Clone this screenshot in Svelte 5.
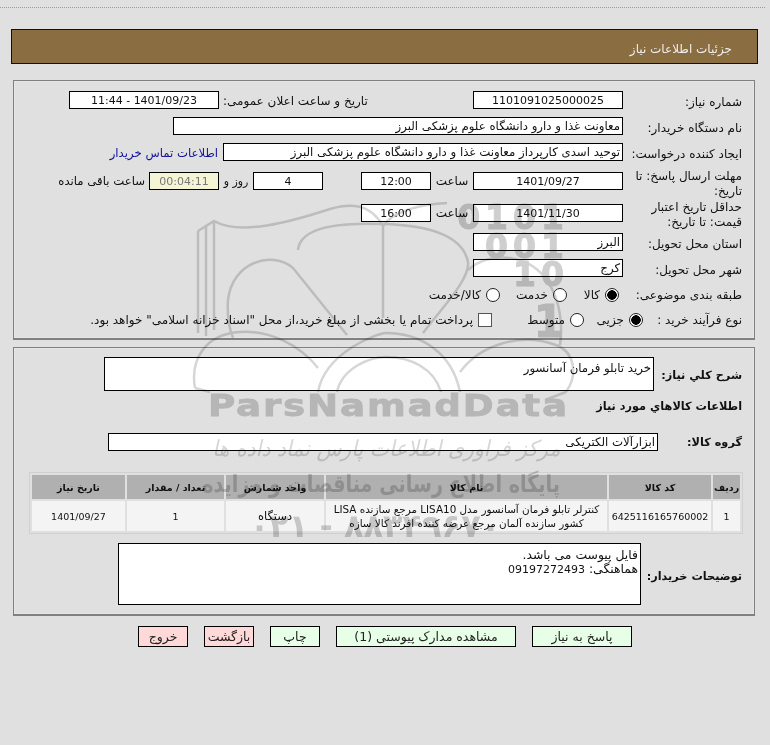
<script>
	const rows = [
		{ no: '1', code: '6425116165760002', name: ['کنترلر تابلو فرمان آسانسور مدل LISA10 مرجع سازنده LISA', 'کشور سازنده آلمان مرجع عرضه کننده افرند کالا سازه'], unit: 'دستگاه', qty: '1', date: '1401/09/27' }
	];
</script>

<div class="page">
	<div class="dots"></div>
	<div class="head">جزئیات اطلاعات نیاز</div>

	<section class="panel first">
		<div class="row h26">
			<div class="lab">شماره نیاز:</div>
			<div class="box w150 c n">1101091025000025</div>
			<div class="lab2">تاریخ و ساعت اعلان عمومی:</div>
			<div class="box w150 c n">1401/09/23 - 11:44</div>
		</div>
		<div class="row h26">
			<div class="lab">نام دستگاه خریدار:</div>
			<div class="box w450">معاونت غذا و دارو دانشگاه علوم پزشکی البرز</div>
		</div>
		<div class="row h29">
			<div class="lab">ایجاد کننده درخواست:</div>
			<div class="box w400">توحید اسدی کارپرداز معاونت غذا و دارو دانشگاه علوم پزشکی البرز</div>
			<span class="link">اطلاعات تماس خریدار</span>
		</div>
		<div class="row h32">
			<div class="lab tall">مهلت ارسال پاسخ: تا تاریخ:</div>
			<div class="box w150 c n">1401/09/27</div>
			<div class="sa">ساعت</div>
			<div class="box w70 c n">12:00</div>
			<div class="box w70 c n ml">4</div>
			<div class="roz">روز و</div>
			<div class="box w70 c n timer">00:04:11</div>
			<div class="left">ساعت باقی مانده</div>
		</div>
		<div class="row h29">
			<div class="lab tall up">حداقل تاریخ اعتبار قیمت: تا تاریخ:</div>
			<div class="box w150 c n">1401/11/30</div>
			<div class="sa">ساعت</div>
			<div class="box w70 c n">16:00</div>
		</div>
		<div class="row h26">
			<div class="lab">استان محل تحویل:</div>
			<div class="box w150">البرز</div>
		</div>
		<div class="row h26">
			<div class="lab">شهر محل تحویل:</div>
			<div class="box w150">کرج</div>
		</div>
		<div class="row opts">
			<div class="lab l-cat">طبقه بندی موضوعی:</div>
			<div class="opt o52"><i class="radio on"></i>کالا</div>
			<div class="opt o67"><i class="radio"></i>خدمت</div>
			<div class="opt"><i class="radio"></i>کالا/خدمت</div>
		</div>
		<div class="row opts proc">
			<div class="lab l-proc">نوع فرآیند خرید :</div>
			<div class="opt o59"><i class="radio on"></i>جزیی</div>
			<div class="opt o92"><i class="radio"></i>متوسط</div>
			<div class="opt"><i class="check"></i>پرداخت تمام یا بخشی از مبلغ خرید،از محل "اسناد خزانه اسلامی" خواهد بود.</div>
		</div>
	</section>

	<section class="panel second">
		<div class="row desc">
			<div class="lab b l88">شرح کلي نیاز:</div>
			<div class="box area1">خرید تابلو فرمان آسانسور</div>
		</div>
		<div class="title b">اطلاعات کالاهاي مورد نیاز</div>
		<div class="row grp">
			<div class="lab b l84">گروه کالا:</div>
			<div class="box w550">ابزارآلات الکتریکی</div>
		</div>

		<table>
			<thead>
				<tr>
					<th class="t1">ردیف</th>
					<th class="t2">کد کالا</th>
					<th class="t3">نام کالا</th>
					<th class="t4">واحد شمارش</th>
					<th class="t5">تعداد / مقدار</th>
					<th class="t6">تاریخ نیاز</th>
				</tr>
			</thead>
			<tbody>
				{#each rows as r}
					<tr>
						<td class="dg">{r.no}</td>
						<td class="dg">{r.code}</td>
						<td class="nm">{#each r.name as line}<div>{line}</div>{/each}</td>
						<td class="un">{r.unit}</td>
						<td class="dg">{r.qty}</td>
						<td class="dg">{r.date}</td>
					</tr>
				{/each}
			</tbody>
		</table>

		<div class="row notes">
			<div class="lab b l101">توضیحات خریدار:</div>
			<div class="box area2">فایل پیوست می باشد.<br />هماهنگی: <span class="n">09197272493</span></div>
		</div>
	</section>

	<div class="btns">
		<button class="g w100">پاسخ به نیاز</button>
		<button class="g w180">مشاهده مدارک پیوستی (1)</button>
		<button class="g w50">چاپ</button>
		<button class="r w50">بازگشت</button>
		<button class="r w50">خروج</button>
	</div>

	<!-- watermark lies over everything -->
	<div class="mark">
		<svg width="770" height="745" viewBox="0 0 770 745" fill="none" stroke="#d6d6d6" stroke-width="2.5">
			<path d="M198 231V333M206 226V336M214 221V330" />
			<path d="M198 231L214 221C240 236 290 222 330 209C350 203 370 203 383 226" />
			<path d="M383 226C392 212 420 204 447 203" />
			<path d="M383 226V318" />
			<path d="M298 250C300 228 335 222 383 224C420 225 462 232 468 262C470 280 440 310 423 333" />
			<path d="M347 335L293 268C272 250 232 262 228 300C227 315 229 328 233 338" />
			<path d="M468 270C490 250 530 254 548 282C560 300 563 325 560 345" />
			<path d="M195 388C190 360 205 334 240 332C270 330 300 345 318 368" />
			<path d="M318 392C325 352 378 333 386 333C420 333 452 352 460 392" />
			<path d="M337 392C342 368 370 357 386 357C410 357 434 368 441 392" />
			<path d="M460 372C480 345 520 332 556 345C575 352 578 375 566 392" />
			<path d="M195 388L210 392M566 392L545 400" />
		</svg>
		<div class="nums"><div>0101</div><div>001</div><div>10</div><div class="one">1</div></div>
		<div class="pnd">ParsNamadData</div>
		<div class="cal">مرکز فراوری اطلاعات پارس نماد داده ها</div>
		<div class="pay">پایگاه اطلاع رسانی مناقصات و مزایده</div>
		<div class="tel">۰۲۱ - ۸۸۳۴۹۶۷۰</div>
	</div>
</div>

<style>
	:global(body) {
		margin: 0;
		background: #e0e0e0;
	}
	.page {
		position: relative;
		width: 770px;
		height: 745px;
		overflow: hidden;
		direction: rtl;
		padding-top: 7px;
		box-sizing: border-box;
		font: 12px/13px "DejaVu Sans", sans-serif;
		color: #111;
	}
	.dots {
		width: 765px;
		margin-right: 5px;
		border-top: 1px dotted #999;
	}
	.head {
		box-sizing: border-box;
		width: 747px;
		height: 35px;
		margin: 21px 12px 0 11px;
		padding: 0 25px;
		border: 1px solid #111;
		background: #8b6d42;
		color: #eee;
		line-height: 38px;
	}
	.panel {
		box-sizing: border-box;
		width: 742px;
		margin: 0 15px 0 13px;
		border: 1px solid #808080;
		border-bottom-width: 2px;
		box-shadow: inset 0 0 0 1px #e6e6e6;
	}
	.first {
		height: 260px;
		margin-top: 16px;
		padding: 10px 12px 0 0;
	}
	.second {
		height: 269px;
		margin-top: 7px;
		padding: 9px 12px 0 0;
	}
	.row {
		display: flex;
		align-items: flex-start;
	}
	.h26 { height: 26px; }
	.h29 { height: 29px; }
	.h32 { height: 32px; }
	.lab {
		flex: none;
		box-sizing: border-box;
		width: 119px;
		padding: 4px 0 0 4px;
		line-height: 15px;
	}
	.tall { margin-top: -3px; padding-top: 0; }
	.up { margin-top: -4px; }
	.box {
		flex: none;
		box-sizing: border-box;
		height: 18px;
		padding: 0 2px;
		border: 1px solid #000;
		background: #fff;
		font-size: 11.75px;
		line-height: 17px;
		white-space: nowrap;
		overflow: hidden;
	}
	.n { font-size: 11px; }
	.c { text-align: center; }
	.w70 { width: 70px; }
	.w150 { width: 150px; }
	.w400 { width: 400px; }
	.w450 { width: 450px; }
	.w550 { width: 550px; }
	.lab2 {
		box-sizing: border-box;
		width: 254px;
		padding: 4px 0 0 4px;
		text-align: left;
	}
	.link {
		margin-right: 5px;
		padding-top: 4px;
		font-size: 11.7px;
		color: #11119a;
	}
	.sa {
		width: 42px;
		padding-top: 3px;
		text-align: center;
	}
	.ml { margin-right: 38px; }
	.roz {
		width: 34px;
		padding-top: 3px;
		font-size: 11px;
		text-align: center;
	}
	.timer {
		background: #f5f5d5;
		color: #777;
	}
	.left {
		margin-right: 4px;
		padding-top: 3px;
		font-size: 11.7px;
	}
	.opts { align-items: center; height: 20px; }
	.proc { margin-top: 5px; }
	.l-cat { width: 123px; padding-top: 0; }
	.l-proc { width: 99px; padding-top: 0; }
	.opt {
		display: flex;
		align-items: center;
		gap: 5px;
		white-space: nowrap;
	}
	.o52 { width: 52px; }
	.o67 { width: 67px; }
	.o59 { width: 59px; }
	.o92 { width: 92px; }
	.radio {
		box-sizing: border-box;
		flex: none;
		width: 14px;
		height: 14px;
		border: 1px solid #222;
		border-radius: 50%;
		background: #fff;
	}
	.radio.on {
		background: radial-gradient(circle, #000 0 4.5px, #fff 5px);
	}
	.check {
		box-sizing: border-box;
		flex: none;
		width: 14px;
		height: 14px;
		border: 1px solid #555;
		background: #fff;
	}
	.b { font-size: 11.3px; font-weight: bold; }
	.desc { height: 76px; }
	.l88 { width: 88px; padding: 11px 0 0 0; }
	.area1 {
		width: 550px;
		height: 34px;
		white-space: normal;
		padding: 2px;
		line-height: 16px;
	}
	.title {
		height: 0;
		margin-top: -33px;
		padding-bottom: 33px;
	}
	.grp { height: 39px; }
	.l84 { width: 84px; padding: 2px 0 0 0; }
	table {
		box-sizing: border-box;
		width: 714px;
		height: 59px;
		margin-right: -1px;
		border: 1px solid #d0d0d0;
		border-spacing: 2px;
		table-layout: fixed;
	}
	th {
		height: 24px;
		padding: 0;
		background: #b0b0b0;
		font-size: 9.5px;
		font-weight: bold;
		text-align: center;
	}
	td {
		height: 30px;
		padding: 0;
		background: #f4f4f4;
		text-align: center;
	}
	.dg { font-size: 9.5px; }
	.un { font-size: 11.5px; }
	.nm {
		font-size: 10.4px;
		line-height: 14px;
		white-space: nowrap;
	}
	.t1 { width: 27px; }
	.t2 { width: 102px; }
	.t3 { width: 281px; }
	.t4 { width: 98px; }
	.t5 { width: 97px; }
	.notes { margin-top: 9px; }
	.l101 { width: 101px; padding: 26px 0 0 0; }
	.area2 {
		width: 523px;
		height: 62px;
		white-space: normal;
		padding: 4px 2px 0;
		font-size: 12.4px;
		line-height: 14px;
	}
	.btns {
		display: flex;
		gap: 16px;
		margin: 10px 138px 0 0;
	}
	button {
		box-sizing: border-box;
		height: 21px;
		padding: 0;
		border: 1px solid #000;
		border-radius: 0;
		font: inherit;
		font-size: 12.5px;
		color: #222;
	}
	.g { background: #e6ffe6; }
	.r { background: #ffd8d8; }
	.w50 { width: 50px; }
	.w100 { width: 100px; }
	.w180 { width: 180px; }
	.mark {
		position: absolute;
		inset: 0;
		pointer-events: none;
		mix-blend-mode: multiply;
		direction: ltr;
		color: #cfcfcf;
		font-family: "DejaVu Sans", sans-serif;
		font-weight: bold;
		white-space: nowrap;
	}
	.mark svg { position: absolute; left: 0; top: 0; }
	.nums {
		position: absolute;
		right: 201px;
		top: 204px;
		text-align: right;
		font-size: 33px;
		line-height: 28.5px;
		letter-spacing: 5px;
		-webkit-text-stroke: 1px #cfcfcf;
	}
	.one { margin-top: 18px; font-size: 44px; }
	.pnd {
		position: absolute;
		left: 208px;
		top: 387px;
		font-size: 31px;
		line-height: 36px;
		letter-spacing: 1.5px;
		transform-origin: left center;
		transform: scaleX(1.2);
		-webkit-text-stroke: 0.8px #cfcfcf;
	}
	.cal {
		position: absolute;
		left: 212px;
		top: 434px;
		width: 350px;
		direction: rtl;
		font-size: 22px;
		line-height: 30px;
		font-weight: normal;
		transform-origin: right center;
		transform: scaleX(0.93) skewX(-14deg);
		color: #d6d6d6;
	}
	.pay {
		position: absolute;
		left: 205px;
		top: 467px;
		width: 355px;
		direction: rtl;
		font-size: 24px;
		line-height: 34px;
		transform-origin: right center;
		transform: scaleX(0.8);
	}
	.tel {
		position: absolute;
		left: 243px;
		top: 503px;
		width: 264px;
		text-align: center;
		font-size: 32px;
		line-height: 46px;
		letter-spacing: 1px;
	}
</style>
